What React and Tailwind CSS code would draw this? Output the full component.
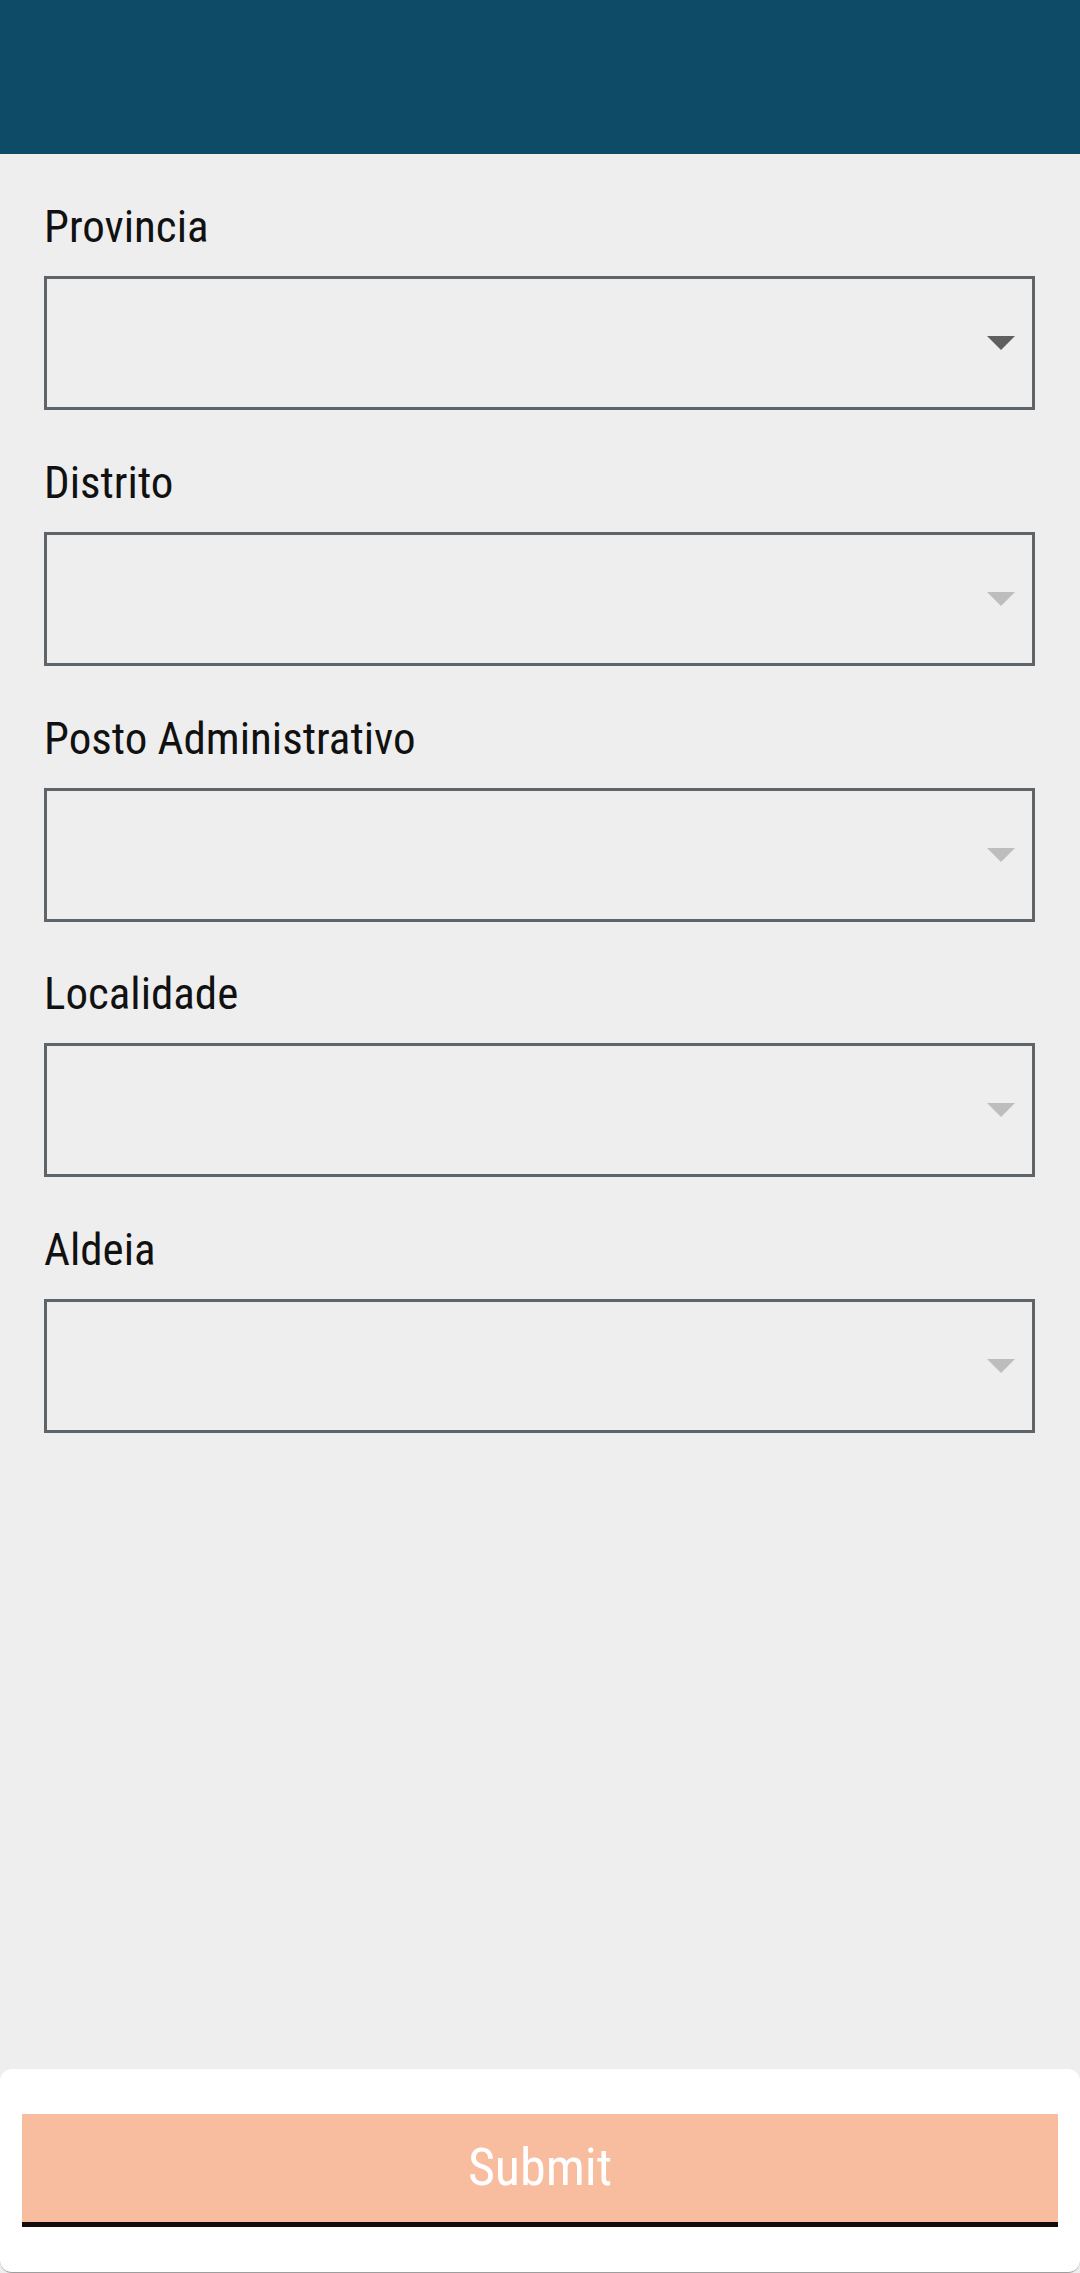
import React from "react";

const fields = [
  { label: "Provincia", active: true },
  { label: "Distrito" },
  { label: "Posto Administrativo" },
  { label: "Localidade" },
  { label: "Aldeia" },
];

function Caret({ active }) {
  return (
    <svg width="28" height="14" viewBox="0 0 28 14" className="block">
      <polygon points="0,0 28,0 14,14" fill={active ? "#5f5f5f" : "#bdbdbd"} />
    </svg>
  );
}

export default function App() {
  return (
    <div
      className="min-h-[2273px] flex flex-col bg-[#eeeeee]"
      style={{ fontFamily: '"Roboto Condensed", "Liberation Sans Narrow", "DejaVu Sans Condensed", Roboto, sans-serif' }}
    >
      <div className="h-[154px] bg-[#0d4b66] shrink-0" />
      <div className="flex-1 pl-[44px] pr-[45px] pt-[45px]">
        {fields.map((f) => (
          <div key={f.label} className="mb-[44.75px]">
            <div className="text-[45px] leading-[55px] text-[#111111]">{f.label}</div>
            <div className="mt-[22px] h-[134px] border-[3px] border-[#5f6469] flex items-center justify-end pr-[17px]">
              <Caret active={f.active} />
            </div>
          </div>
        ))}
      </div>
      <div className="h-[204px] shrink-0 bg-white rounded-[12px] border-b border-[#9e9e9e] px-[22px] pt-[45px]">
        <button className="w-full h-[113px] bg-[#f8bd9f] border-b-[5px] border-[#140c08] text-white text-[52px] leading-none flex items-center justify-center">
          Submit
        </button>
      </div>
    </div>
  );
}
